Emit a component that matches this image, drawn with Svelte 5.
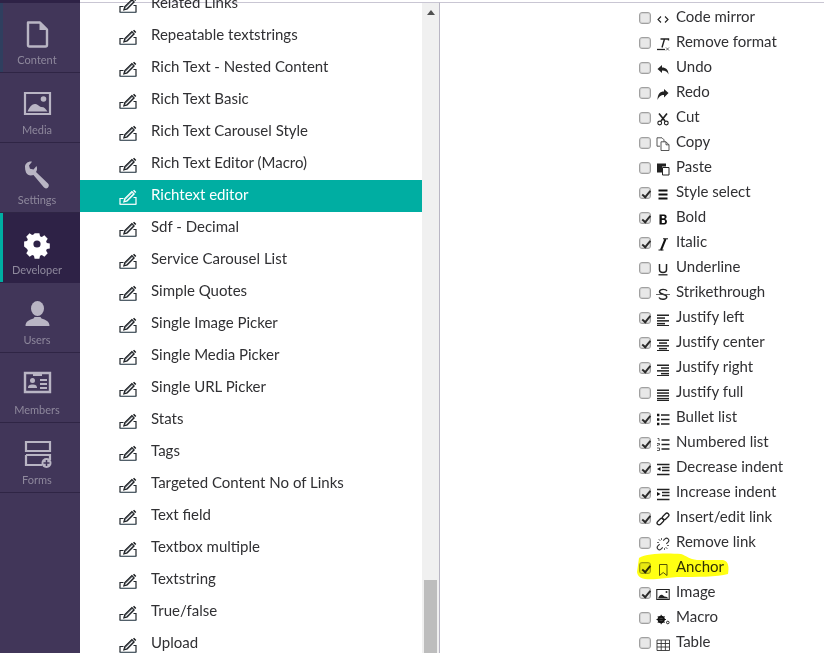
<script>
  const nav = [
    { label: 'Content', icon: 'content', strip: true },
    { label: 'Media', icon: 'media' },
    { label: 'Settings', icon: 'settings' },
    { label: 'Developer', icon: 'developer', active: true },
    { label: 'Users', icon: 'users' },
    { label: 'Members', icon: 'members' },
    { label: 'Forms', icon: 'forms' }
  ];
  const types = ['Related Links','Repeatable textstrings','Rich Text - Nested Content','Rich Text Basic','Rich Text Carousel Style','Rich Text Editor (Macro)','Richtext editor','Sdf - Decimal','Service Carousel List','Simple Quotes','Single Image Picker','Single Media Picker','Single URL Picker','Stats','Tags','Targeted Content No of Links','Text field','Textbox multiple','Textstring','True/false','Upload'];
  const opts = [
    ['Code mirror','code',0],['Remove format','removeformat',0],['Undo','undo',0],['Redo','redo',0],['Cut','cut',0],['Copy','copy',0],['Paste','paste',0],
    ['Style select','style',1],['Bold','bold',1],['Italic','italic',1],['Underline','underline',0],['Strikethrough','strike',0],
    ['Justify left','left',1],['Justify center','center',1],['Justify right','right',1],['Justify full','full',0],
    ['Bullet list','bullet',1],['Numbered list','numbered',1],['Decrease indent','outdent',1],['Increase indent','indent',1],
    ['Insert/edit link','link',1],['Remove link','unlink',0],['Anchor','anchor',1],['Image','image',1],['Macro','macro',0],['Table','table',0]
  ];
</script>

<div class="page">
  <nav class="sidebar">
    {#each nav as n}
      <div class="nav-item" class:active={n.active} class:strip={n.strip}>
        <svg class="nav-icon" viewBox="0 0 32 32" width="32" height="32">
          {#if n.icon === 'content'}
            <path d="M7 4.500h12l7 7V27a1.500 1.500 0 0 1-1.500 1.500h-16A1.500 1.500 0 0 1 7 27z" fill="none" stroke="currentColor" stroke-width="2.400" stroke-linejoin="round"/>
            <path d="M18.500 4.500v7.500h7.500z" fill="currentColor"/>
          {:else if n.icon === 'media'}
            <path d="M4 5h25v21H4z" fill="none" stroke="currentColor" stroke-width="2.200"/>
            <circle cx="22.500" cy="11" r="2.800" fill="currentColor"/>
            <path d="M6.500 23.500c2-5 5-8 8-7.500 3 .5 4 3 6 3 3 0 4 2 6 4.500z" fill="currentColor"/>
          {:else if n.icon === 'settings'}
            <path d="M4 8.500c.2-3 3.500-5.500 7-4.800L8 7.500l1 3.300 3.500.8 3-3.500c1 2.300.6 4.500-.5 6l12 11.500c1.300 1.400 1 3.300-.2 4.200-1.300 1-3 .8-4-.5L12.500 17c-3 1-6 .5-7.500-2.500C4.300 12.500 3.900 10.500 4 8.500z" fill="currentColor"/>
          {:else if n.icon === 'developer'}
            <path fill-rule="evenodd" d="M13 2.500h6l.8 3.700 2.200.9 3.200-2 4.200 4.200-2 3.200.9 2.200 3.700.8v6l-3.700.8-.9 2.200 2 3.200-4.200 4.200-3.200-2-2.200.9-.8 3.700h-6l-.8-3.700-2.200-.9-3.200 2-4.200-4.200 2-3.200-.9-2.200L-.1 19v-6l3.700-.8.9-2.200-2-3.200 4.200-4.200 3.200 2 2.200-.9zM16 11.500a4.500 4.500 0 1 0 0 9 4.500 4.500 0 0 0 0-9z" fill="currentColor" transform="translate(3.200 3.200) scale(.8)"/>
          {:else if n.icon === 'users'}
            <ellipse cx="16.500" cy="10.500" rx="6.500" ry="7.500" fill="currentColor"/>
            <path d="M4.500 28c0-5 4-6 8-7.500l1-1.500h6l1 1.500c4 1.500 8 2.500 8 7.500z" fill="currentColor"/>
          {:else if n.icon === 'members'}
            <path d="M4 5h25v19H4z" fill="none" stroke="currentColor" stroke-width="2.400"/>
            <path d="M12 5v3h9V5" fill="currentColor"/>
            <circle cx="11.500" cy="12.500" r="2.500" fill="currentColor"/>
            <path d="M7 20c0-3 2-3.500 4.500-3.500s4.500.5 4.500 3.500z" fill="currentColor"/>
            <path d="M19 12h7M19 16h7M19 20h7" stroke="currentColor" stroke-width="2"/>
          {:else}
            <path d="M5 4h24v9H5zM5 17h24v5M5 17v10h16" fill="none" stroke="currentColor" stroke-width="2.200"/>
            <circle cx="25.500" cy="25" r="5" fill="currentColor"/>
            <path d="M25.500 22v6M22.500 25h6" stroke="#413659" stroke-width="1.500"/>
          {/if}
        </svg>
        <span>{n.label}</span>
      </div>
    {/each}
  </nav>

  <section class="tree">
    <ul>
      {#each types as t}
        <li class:selected={t === 'Richtext editor'}>
          <svg class="edit" viewBox="0 0 18 16" width="18" height="16">
            <path class="tray" d="M1 15V9.500h3.500M14.500 8.500h2.500V15" fill="none" stroke-width="1.200"/>
            <path class="tray2" d="M.5 15.300h17" fill="none" stroke-width="1.200"/>
            <path class="pen-out" d="M4.800 13l1-3.400 7.100-7 2.300 2.300-7 7.100z" stroke-width="1.100"/>
            <path class="pen-in" d="M6.800 11.200l6.600-6.600" stroke-width="1"/>
            <path class="pen" d="M14 1.800l1.100-1.100 2.200 2.200-1.100 1.100z"/>
          </svg>
          <span>{t}</span>
        </li>
      {/each}
    </ul>
    <div class="scrollbar">
      <svg class="arrow" viewBox="0 0 8 5" width="8" height="5"><path d="M4 0l4 5H0z" fill="#505050"/></svg>
      <div class="thumb"></div>
    </div>
  </section>

  <section class="options">
    {#each opts as [label, icon, checked]}
      <label class="opt">
        <input type="checkbox" checked={!!checked} />
        <svg class="ticon" viewBox="0 0 14 14" width="14" height="14">
          {#if icon === 'code'}
            <path d="M5 4.500L2 7.500l3 3M9 4.500l3 3-3 3" fill="none" stroke="#222" stroke-width="1.100"/>
          {:else if icon === 'removeformat'}
            <path d="M4.500 2h8v1.500M8.500 2L6 10.500" fill="none" stroke="#222" stroke-width="1.400"/><path d="M1 12.500h8" stroke="#222" stroke-width="1.300"/><path d="M10 10.500l3 3M13 10.500l-3 3" stroke="#555" stroke-width=".9"/>
          {:else if icon === 'undo'}
            <path d="M1.500 7L6 3v2.500c4 0 6.500 2.500 6.500 7-1-2.500-3-4-6.500-4V11z" fill="#222"/>
          {:else if icon === 'redo'}
            <path d="M12.500 6L8 2v2.500c-4 0-6.500 2.500-6.500 8.500C3 9.500 4.500 8 8 8v2.500z" fill="#222"/>
          {:else if icon === 'cut'}
            <path d="M3 1.500L9 9M11 1.500L5 9" stroke="#222" stroke-width="1.700"/><circle cx="3.700" cy="11" r="1.900" fill="none" stroke="#222" stroke-width="1.100"/><circle cx="10.300" cy="11" r="1.900" fill="none" stroke="#222" stroke-width="1.100"/>
          {:else if icon === 'copy'}
            <path d="M1 .8h5l2 2v2M1 .8v8.400h3M5 4.800h5l3 3v5.700H5zM10 4.800v3h3" fill="#fff" stroke="#444" stroke-width=".9"/>
          {:else if icon === 'paste'}
            <path d="M1 1.500h9v3H6v6H1z" fill="#222"/><path d="M6.500 5.500h6.500v7.500H6.500z" fill="#fff" stroke="#222"/>
          {:else if icon === 'style'}
            <path d="M2.500 3.500h9M2.500 7.500h9M2.500 11.500h9" stroke="#111" stroke-width="2"/>
          {:else if icon === 'bold'}
            <path d="M3.500 2.500h4.800c3 0 3 4.200.5 4.500 3 .3 3 5.500-.5 5.500H3.500zM5.800 4v2.300h2c1.100 0 1.100-2.300 0-2.300zM5.800 8v3h2.300c1.300 0 1.300-3 0-3z" fill="#111" fill-rule="evenodd"/>
          {:else if icon === 'italic'}
            <path d="M9.500 2L5 13" stroke="#111" stroke-width="2"/><path d="M7 1.800h5M2.500 13h5" stroke="#111" stroke-width="1"/>
          {:else if icon === 'underline'}
            <path d="M3.500 2v5.500c0 4 7 4 7 0V2" fill="none" stroke="#222" stroke-width="1.500"/><path d="M2.500 12.800h9" stroke="#222" stroke-width="1.300"/>
          {:else if icon === 'strike'}
            <path d="M11 4c-1-2-7-2.500-7.500.5C3 8 11 6.500 10.800 10c-.4 3-6.500 3-7.800.5" fill="none" stroke="#222" stroke-width="1.400"/><path d="M0 7.500h14" stroke="#444" stroke-width=".8"/>
          {:else if icon === 'left' || icon === 'center' || icon === 'right' || icon === 'full'}
            {@const shapes = { left: [[1,12],[1,8],[1,12],[1,8]], center: [[1,12],[3,8],[1,12],[3,8]], right: [[1,12],[5,8],[1,12],[5,8]], full: [[1,12],[1,12],[1,12],[1,12]] }}
            {#each shapes[icon] as [x, w], i}
              <rect x={x} y={2.500 + i * 2.800} width={w} height="1.500" fill="#222"/>
            {/each}
            <rect x="1" y="13" width="12" height="1" fill="#222"/>
          {:else if icon === 'bullet'}
            <path d="M5 3h8.500M5 7.500h8.500M5 12h8.500" stroke="#222" stroke-width="1.300"/><path d="M1 1.800h2.400v2.400H1zM1 6.300h2.400v2.400H1zM1 10.800h2.400v2.400H1z" fill="#111"/>
          {:else if icon === 'numbered'}
            <path d="M5.500 3h8M5.500 7.500h8M5.500 12h8" stroke="#222" stroke-width="1.300"/><path d="M1.500 1.500h1.500v2.500M1 6.500h2.500v1.500H1.500v1M1 11h2.500v2.500H1" fill="none" stroke="#333" stroke-width=".8"/>
          {:else if icon === 'outdent' || icon === 'indent'}
            <path d="M1 2.500h12.500M6 5.500h7.500M6 8.500h7.500M1 12.500h12.500" stroke="#222" stroke-width="1.400"/>
            {#if icon === 'outdent'}<path d="M4.500 5L1 7l3.500 2z" fill="#111"/>{:else}<path d="M1 5l3.500 2L1 9z" fill="#111"/>{/if}
          {:else if icon === 'link'}
            <g transform="rotate(-45 7 7)" fill="none" stroke="#222" stroke-width="1.300">
              <rect x="-.5" y="5" width="7.500" height="4" rx="2"/>
              <rect x="7" y="5" width="7.500" height="4" rx="2"/>
            </g>
          {:else if icon === 'unlink'}
            <g transform="rotate(-45 7 7)" fill="none" stroke="#333" stroke-width="1.100">
              <path d="M4.500 4.800H2a2.200 2.200 0 0 0 0 4.400h2.500M9.500 4.800H12a2.200 2.200 0 0 1 0 4.400H9.500"/>
            </g>
            <path d="M2.500 2l2 2M1 5.500h2M5.500 1v2M11.500 12l-2-2M13 8.500h-2M8.500 13v-2" stroke="#555" stroke-width=".9"/>
          {:else if icon === 'anchor'}
            <path d="M3.500 2.500h7.500v11L7.200 10.500 3.500 13.500z" fill="none" stroke="#555" stroke-width="1"/>
          {:else if icon === 'image'}
            <path d="M.8 2.500h12.400v10H.8z" fill="none" stroke="#222" stroke-width="1.100"/><circle cx="10.500" cy="5" r="1" fill="#222"/><path d="M2 11.500c1-3 3-4.500 4.500-3.500l2 1.500c2 0 3 .7 4 2z" fill="#222"/>
          {:else if icon === 'macro'}
            <circle cx="5.200" cy="7.500" r="2.700" fill="none" stroke="#111" stroke-width="2"/>
            <path d="M5.200 2.800v9.400M.5 7.500h9.400M1.900 4.200l6.600 6.600M8.500 4.200l-6.600 6.600" stroke="#111" stroke-width="1"/>
            <circle cx="11.800" cy="10.500" r="1.300" fill="none" stroke="#222" stroke-width="1"/>
          {:else}
            <path d="M1 3h12.500v10.500H1zM1 6.500h12.500M1 10h12.500M5.200 3v10.500M9.400 3v10.500" fill="none" stroke="#333" stroke-width=".9"/>
          {/if}
        </svg>
        <span>{label}</span>
        {#if icon === 'anchor'}
          <svg class="marker" viewBox="0 0 92 28" width="92" height="28" aria-hidden="true">
            <path d="M2 6C10 1 30 1 44 2c6 2 8 5 16 6h26c6 1 6 8 5 14-11 3-31 3-51 3l-20 2C8 28 1 27 0 20z" fill="#ffff12"/>
          </svg>
        {/if}
      </label>
    {/each}
  </section>
</div>

<style>
  :global(body) { margin: 0; background: #fff; }
  .page {
    display: flex;
    width: 824px;
    height: 653px;
    overflow: hidden;
    font-family: Lato, "Open Sans", sans-serif;
    font-size: 15px;
    color: #303033;
  }
  .sidebar {
    flex: 0 0 80px;
    background: #413659;
    border-top: 3px solid #2e2246;
    box-sizing: border-box;
  }
  .nav-item {
    height: 70px;
    box-sizing: border-box;
    border-bottom: 1px solid #2f2545;
    display: flex;
    flex-direction: column;
    align-items: center;
    padding: 15px 6px 0 0;
    color: #b9b5c4;
    font-size: 11px;
    position: relative;
  }
  .nav-item span { color: #8e889c; margin-top: 2px; line-height: 15px; }
  .nav-icon { display: block; }
  .nav-item.active {
    background: #2e2246;
    color: #fff;
    box-shadow: inset 3px 0 0 #00aea2;
    border-bottom-color: #2e2246;
  }
  .nav-item.strip { box-shadow: inset 3px 0 0 #2f3f5f; }
  .tree {
    flex: 0 0 360px;
    display: flex;
    border-top: 1px solid #c9c6d3;
    margin-top: 2px;
    box-sizing: border-box;
    height: 651px;
    border-right: 1px solid #b9b6c4;
  }
  ul {
    list-style: none;
    margin: -15px 0 0;
    padding: 0;
    flex: 0 0 342px;
  }
  li {
    height: 32px;
    display: flex;
    align-items: center;
    padding-left: 39px;
    gap: 14px;
  }
  li span { position: relative; top: -2px; }
  .edit { flex: none; position: relative; top: 1px; }
  .tray { stroke: #22272c; }
  .tray2 { stroke: #3e4d59; }
  .pen { fill: #14171a; }
  .pen-out { fill: #8a8f94; stroke: #1b1e22; }
  .pen-in { stroke: #f4f4f4; fill: none; }
  li.selected { background: #00aea2; color: #fff; }
  li.selected .tray, li.selected .tray2 { stroke: #fff; }
  li.selected .pen { fill: #fff; }
  li.selected .pen-out { fill: #8fdcd6; stroke: #fff; }
  li.selected .pen-in { stroke: #00aea2; }
  .scrollbar {
    flex: 0 0 17px;
    background: #f0f0f0;
    position: relative;
  }
  .arrow { position: absolute; top: 7px; left: 5px; }
  .thumb {
    position: absolute;
    left: 2px;
    right: 2px;
    top: 577px;
    bottom: 0;
    background: #bdbdbd;
  }
  .options {
    flex: 1;
    margin-top: 2px;
    border-top: 1px solid #c9c6d3;
    padding: 1.500px 0 0 199px;
    box-sizing: border-box;
    height: 651px;
  }
  .opt {
    height: 25px;
    display: flex;
    align-items: center;
    position: relative;
  }
  .opt span { margin-left: 6px; position: relative; top: -1px; }
  .marker {
    position: absolute;
    left: -2px;
    top: -3px;
    mix-blend-mode: multiply;
  }
  input {
    appearance: none;
    -webkit-appearance: none;
    width: 12px;
    height: 12px;
    margin: 0 5px 0 0;
    box-sizing: border-box;
    flex: none;
    border: 1px solid #a0a0a0;
    box-shadow: inset 0 0 0 1px #d2d2d2;
    border-radius: 3px;
    background: #e8e8e8;
    position: relative;
    top: 1px;
  }
  input:checked::after {
    content: "";
    position: absolute;
    left: 3.500px;
    top: .500px;
    width: 3px;
    height: 6.500px;
    border: solid #2b2b2b;
    border-width: 0 2px 2px 0;
    transform: rotate(40deg);
  }
  .ticon { flex: none; position: relative; top: 2px; }
</style>
